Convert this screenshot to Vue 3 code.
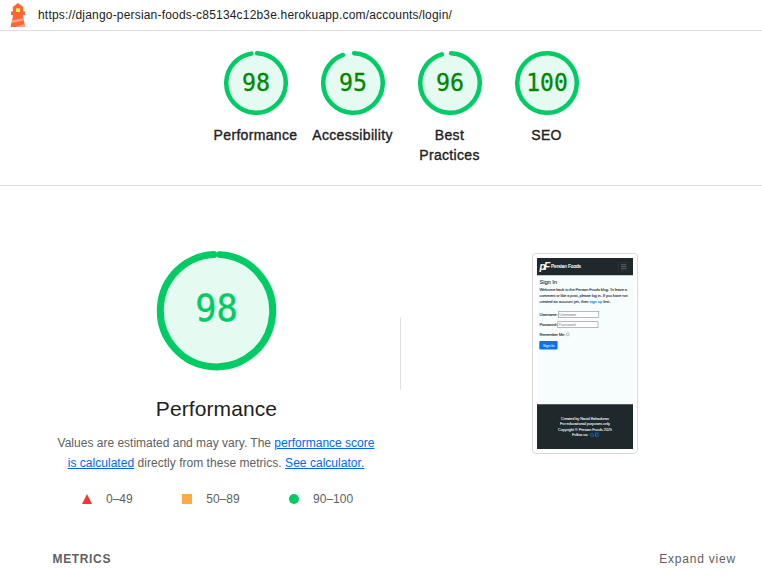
<script setup>
const scores = [
  { value: 98, label: 'Performance' },
  { value: 95, label: 'Accessibility' },
  { value: 96, label: 'Best Practices' },
  { value: 100, label: 'SEO' },
]
const circumference = 2 * Math.PI * 29.75
const dash = (value) =>
  value === 100 ? 'none' : `${(value / 100) * circumference - 2.25} ${circumference}`
</script>

<template>
  <div class="report">
    <header class="topbar">
      <svg class="logo" viewBox="0 0 16 24" width="16" height="24">
        <path d="M8 0 13.2 4V8.5H15V12H13.2V14L15.2 24H.5L2.8 14V12H1V8.5H2.8V4Z" fill="#ff6536" />
        <path d="M6 5.3h4v3.7H6Z" fill="#fff04a" />
        <path d="M13.4 15 13.9 17.5 1.5 20 2 17.6ZM14.6 21 15.2 24H5Z" fill="#ffa28b" />
      </svg>
      <span class="url">https://django-persian-foods-c85134c12b3e.herokuapp.com/accounts/login/</span>
    </header>

    <section class="scores">
      <div v-for="s in scores" :key="s.label" class="score">
        <svg width="64" height="64" viewBox="0 0 64 64">
          <circle cx="32" cy="32" r="30" fill="#e5faf0" />
          <circle class="arc" cx="32" cy="32" r="29.75" stroke-width="4.5" transform="rotate(-87.9 32 32)" :stroke-dasharray="dash(s.value)" />
          <text x="32" y="40" class="num" :textLength="s.value === 100 ? 41.5 : 28" lengthAdjust="spacingAndGlyphs">{{ s.value }}</text>
        </svg>
        <div class="label">{{ s.label }}</div>
      </div>
    </section>

    <main class="category">
      <div class="overview">
        <svg class="big" width="121" height="120" viewBox="0 0 121 120">
          <circle cx="60.5" cy="59.7" r="58" fill="#e5faf0" />
          <circle class="arc" cx="60.5" cy="59.7" r="56.2" stroke-width="7" transform="rotate(-86.2 60.5 59.7)" stroke-dasharray="346 354" />
          <text x="60.5" y="69.5" class="num num-big" textLength="42.5" lengthAdjust="spacingAndGlyphs">98</text>
        </svg>
        <h1>Performance</h1>
        <p class="desc">
          <span class="line l1">Values are estimated and may vary. The <a>performance score</a></span>
          <span class="line l2"><a>is calculated</a> directly from these metrics. <a>See calculator.</a></span>
        </p>
        <div class="legend">
          <span><svg width="10" height="10"><path d="M5 0 10 10H0Z" fill="#f33" /></svg>0–49</span>
          <span><svg width="10" height="10"><path d="M0 0H10V10H0Z" fill="#fa4" /></svg>50–89</span>
          <span><svg width="10" height="10"><circle cx="5" cy="5" r="5" fill="#0c6" /></svg>90–100</span>
        </div>
      </div>
      <div class="divider"></div>
      <div class="preview">
        <div class="frame">
          <svg class="shot" width="96" height="191" viewBox="0 0 96 191">
            <path d="M0 0H96V191H0Z" fill="#f7fcfd" />
            <path d="M0 0H96V17.3H0Z" fill="#1f282b" />
            <text x="2.5" y="11.5" class="mark" textLength="10.5">pF</text>
            <text x="14" y="10" font-size="4.8" fill="#fff" stroke="#fff" stroke-width=".12" textLength="30">Persian Foods</text>
            <rect x="81.5" y="4.5" width="10.5" height="8.5" rx="1" fill="none" stroke="#30393c" stroke-width=".6" />
            <path d="M84 6.8h5.5M84 8.8h5.5M84 10.8h5.5" stroke="#858d90" stroke-width=".6" />
            <g fill="#2b3235" stroke="#2b3235" stroke-width=".1" font-size="4">
              <text x="2.5" y="25.8" font-size="5.8" textLength="17.5">Sign In</text>
              <text x="2.5" y="33.2" textLength="87.5">Welcome back to the Persian Foods blog. To leave a</text>
              <text x="2.5" y="39" textLength="88">comment or like a post, please log in. If you have not</text>
              <text x="2.5" y="44.7" textLength="71">created an account yet, then <tspan fill="#087dec" stroke="#087dec">sign up</tspan> first.</text>
              <text x="2.5" y="58" textLength="18">Username:</text>
              <text x="2.5" y="68.2" textLength="17.5">Password:</text>
              <text x="2.5" y="78" textLength="25.5">Remember Me:</text>
            </g>
            <g fill="#fff" stroke="#898e90" stroke-width=".6">
              <rect x="21.5" y="53.3" width="40.3" height="6" />
              <rect x="20.7" y="63.7" width="40.3" height="6" />
              <rect x="29.4" y="75" width="2.7" height="2.7" rx=".5" />
            </g>
            <g fill="#777d80" font-size="4">
              <text x="22.3" y="58" textLength="17">Username</text>
              <text x="21.6" y="68.2" textLength="17">Password</text>
            </g>
            <rect x="2.3" y="83" width="18.3" height="8.6" rx="1" fill="#0774ed" />
            <text x="5.8" y="88.8" font-size="4" fill="#fff" textLength="11.7">Sign In</text>
            <path d="M0 146.3H96V191H0Z" fill="#1f282b" />
            <g fill="#e2e6e7" stroke="#e2e6e7" stroke-width=".1" font-size="3.9">
              <text x="24" y="161.6" textLength="48">Created by Navid Bahadoran</text>
              <text x="23" y="167.2" textLength="50">For educational purposes only</text>
              <text x="21" y="172.8" textLength="54">Copyright © Persian Foods 2025</text>
              <text x="35" y="178.4" textLength="16">Follow us:</text>
            </g>
            <g fill="none" stroke="#0774ed" stroke-width=".8">
              <path d="M56 175.6c-3-1.4-3.8 2.8-.5 2.6h1v-1.2h-1M58.5 175.7v2.5" />
              <rect x="58.3" y="175" width="2.8" height="3.2" />
            </g>
          </svg>
        </div>
      </div>
    </main>
    <footer class="metrics"><span class="title">METRICS</span><span class="expand">Expand view</span></footer>
  </div>
</template>

<style>
body { margin: 0; background: #fff; }
</style>

<style scoped>
.report { width: 762px; height: 578px; overflow: hidden; box-sizing: border-box; font-family: "Liberation Sans", Arial, sans-serif; color: #212121; }
.topbar { display: flex; height: 30px; border-bottom: 1px solid #e0e0e0; padding-left: 10px; gap: 12px; }
.logo { margin-top: 3px; }
.url { font-size: 12px; line-height: 30px; white-space: nowrap; letter-spacing: .185px; }
.scores { box-sizing: border-box; height: 155px; border-bottom: 1px solid #e0e0e0; padding: 20px 0 0 207px; display: flex; }
.score { width: 97px; text-align: center; }
.score svg { display: block; margin: 0 auto; }
.arc { fill: none; stroke: #0c6; stroke-linecap: round; }
.num { font-family: "DejaVu Sans Mono", monospace; font-size: 24px; fill: #080; stroke: #080; stroke-width: .3px; text-anchor: middle; }
.num-big { font-size: 37px; fill: #0c6; stroke: #0c6; stroke-width: .4px; }
.label { width: 86px; margin: 10px auto 0; font-size: 14px; line-height: 20px; -webkit-text-stroke: .35px #212121; letter-spacing: .33px; }
.category { display: flex; height: 350px; }
.overview { width: 400px; padding-left: 32px; box-sizing: border-box; padding-right: 0; }
.big { display: block; margin: 65px 0 0 124px; }
h1 { width: 369px; text-align: center; font-size: 21px; line-height: 28px; font-weight: 400; letter-spacing: .1px; margin: 24px 0 0; }
.desc { width: 368px; margin: 10px 0 0; color: #616161; font-size: 12px; line-height: 20px; text-align: center; }
.line { display: block; white-space: nowrap; }
.l2 { letter-spacing: .03px; }
.desc a { color: #06f; text-decoration: underline; }
.legend { display: flex; gap: 49.5px; padding-left: 50px; margin-top: 16px; font-size: 12px; line-height: 20px; color: #616161; }
.legend span { display: flex; align-items: center; gap: 14px; }
.divider { width: 1px; height: 72px; margin-top: 132px; background: #e0e0e0; }
.preview { padding: 67px 0 0 131px; }
.frame { box-sizing: border-box; width: 106px; height: 201px; border: 1px solid #dadada; border-radius: 4px; padding: 4px; }
.shot { display: block; }
.mark { font-size: 10px; font-weight: 700; font-style: italic; fill: #fff; }
.metrics { display: flex; justify-content: space-between; padding: 13px 26px 0 52.5px; font-size: 12px; line-height: 20px; color: #616161; }
.title { font-weight: 700; letter-spacing: .65px; }
.expand { letter-spacing: .8px; }
</style>
